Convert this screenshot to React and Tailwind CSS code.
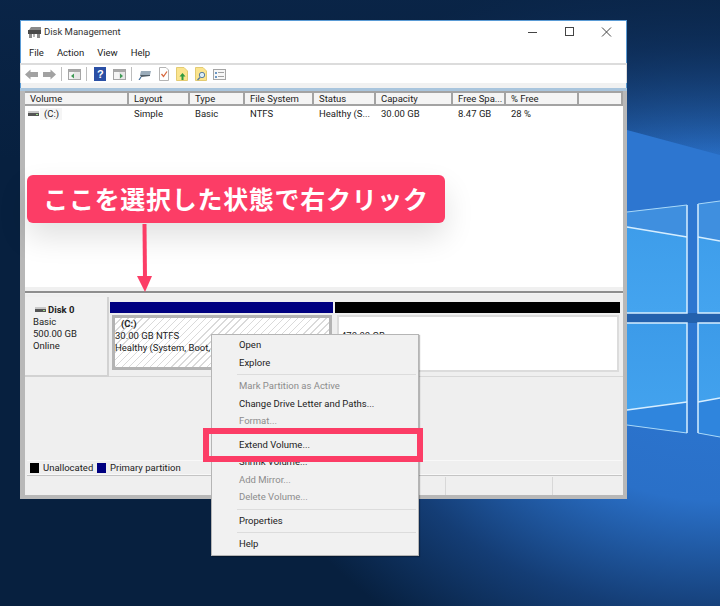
import React from "react";

const columns = [
  { label: "Volume", width: "w-[104px]" },
  { label: "Layout", width: "w-[61px]" },
  { label: "Type", width: "w-[55px]" },
  { label: "File System", width: "w-[69px]" },
  { label: "Status", width: "w-[62px]" },
  { label: "Capacity", width: "w-[77px]" },
  { label: "Free Spa...", width: "w-[53px]" },
  { label: "% Free", width: "w-[73px]" },
  { label: "", width: "flex-1" },
];

const cells = [
  { label: "Simple", width: "w-[61px]" },
  { label: "Basic", width: "w-[55px]" },
  { label: "NTFS", width: "w-[69px]" },
  { label: "Healthy (S...", width: "w-[62px]" },
  { label: "30.00 GB", width: "w-[77px]" },
  { label: "8.47 GB", width: "w-[53px]" },
  { label: "28 %", width: "w-[73px]" },
];

const menuGroups = [
  [
    { label: "Open" },
    { label: "Explore" },
  ],
  [
    { label: "Mark Partition as Active", off: true },
    { label: "Change Drive Letter and Paths..." },
    { label: "Format...", off: true },
  ],
  [
    { label: "Extend Volume..." },
    { label: "Shrink Volume..." },
    { label: "Add Mirror...", off: true },
    { label: "Delete Volume...", off: true },
  ],
  [{ label: "Properties" }],
  [{ label: "Help" }],
];

const DriveIcon = () => (
  <svg width="11" height="6" viewBox="0 0 11 6">
    <rect x="0" y="0" width="11" height="2" fill="#c8c8c8" />
    <rect x="0" y="2" width="11" height="3" fill="#555" />
    <rect x="8" y="3" width="2" height="1" fill="#9fe08a" />
  </svg>
);

const AppIcon = () => (
  <svg width="14" height="13" viewBox="0 0 14 13">
    <path d="M3 1 H13 V4 H1 Z" fill="#8a8a8a" />
    <rect x="0" y="4" width="13" height="4" fill="#4a4a4a" />
    <rect x="1" y="8" width="3" height="4" fill="#8c8c8c" />
    <rect x="9" y="8" width="3" height="4" fill="#8c8c8c" />
    <rect x="5" y="8" width="2" height="3" fill="#b5b5b5" />
  </svg>
);

const ArrowIcon = ({ flip }) => (
  <svg width="13" height="11" viewBox="0 0 13 11" className={flip ? "-scale-x-100" : ""}>
    <path d="M0 5.5 L5.5 .5 V3 H13 V8 H5.5 V10.5 Z" fill="#a2a2a2" />
  </svg>
);

const PaneIcon = ({ green }) => (
  <svg width="13" height="11" viewBox="0 0 13 11">
    <rect x="0.5" y="0.5" width="12" height="10" fill="#e6e6e6" stroke="#a5a5a5" />
    <rect x="1" y="1" width="11" height="2" fill="#a8a8a8" />
    <rect x="1" y="3" width="5" height="7" fill="#f5f5f5" />
    <path d={green ? "M7 4.5 L10 7 L7 9.5 Z" : "M6 4.5 L3 7 L6 9.5 Z"} fill="#3f9a55" />
  </svg>
);

const Separator = () => <div className="h-[14px] w-px bg-[#bdbdbd]" />;

const Toolbar = () => (
  <div className="flex h-[20px] items-center border-t-[2px] border-r border-l border-[#dcdcdc] bg-white pl-[4px]">
    <ArrowIcon />
    <div className="ml-[5px]">
      <ArrowIcon flip />
    </div>
    <div className="ml-[5px]">
      <Separator />
    </div>
    <div className="ml-[6px]">
      <PaneIcon />
    </div>
    <div className="ml-[5px]">
      <Separator />
    </div>
    <svg width="12" height="14" viewBox="0 0 12 14" className="ml-[7px]">
      <rect width="12" height="14" fill="#2a4fa5" />
      <text x="3" y="11" fontSize="11" fontWeight="700" fill="#fff" fontFamily="Liberation Sans, sans-serif">?</text>
    </svg>
    <div className="ml-[7px]">
      <PaneIcon green />
    </div>
    <div className="ml-[5px]">
      <Separator />
    </div>
    <svg width="13" height="11" viewBox="0 0 13 11" className="ml-[6px]">
      <path d="M3 2 H13 L12 6 H2 Z" fill="#9aabb9" />
      <path d="M2 6 H12 V7 L3 8 Z" fill="#4f5c66" />
      <path d="M3 8 L1 11" stroke="#3d6a96" strokeWidth="1.2" />
    </svg>
    <svg width="12" height="14" viewBox="0 0 12 14" className="ml-[7px]">
      <path d="M1.5 .5 H8 L10.5 3 V13.5 H1.5 Z" fill="#fff" stroke="#b4b4b4" />
      <path d="M3.5 7 L5.5 9.5 L9 4.5" fill="none" stroke="#d8693f" strokeWidth="1.3" />
    </svg>
    <svg width="12" height="14" viewBox="0 0 12 14" className="ml-[6px]">
      <path d="M.5 .5 H8 L11.5 4 V13.5 H.5 Z" fill="#fbe48e" stroke="#e3cb72" />
      <path d="M6.5 6 L9.5 9.5 H7.5 V13 H5.5 V9.5 H3.5 Z" fill="#2f9a3f" />
    </svg>
    <svg width="12" height="14" viewBox="0 0 12 14" className="ml-[7px]">
      <path d="M.5 .5 H8 L11.5 4 V13.5 H.5 Z" fill="#fbe48e" stroke="#e3cb72" />
      <circle cx="7" cy="8" r="2.7" fill="#d9ecf7" stroke="#5c7f9c" />
      <path d="M5 10.5 L2.5 13" stroke="#5c7f9c" strokeWidth="1.4" />
    </svg>
    <svg width="13" height="11" viewBox="0 0 13 11" className="ml-[6px]">
      <rect x=".5" y=".5" width="12" height="10" fill="#f7f7f7" stroke="#a5a5a5" />
      <rect x="2" y="3" width="2" height="2" fill="#6b97c4" />
      <rect x="2" y="7" width="2" height="2" fill="#6b97c4" />
      <rect x="5" y="3" width="6" height="1" fill="#a0a0a0" />
      <rect x="5" y="7" width="6" height="1" fill="#a0a0a0" />
    </svg>
  </div>
);

const VolumeList = () => (
  <div className="flex h-[200px] flex-col border-l-[5px] border-r-[4px] border-[#b8b8b8] bg-white">
    <div className="flex h-[15px] border-t-[2px] border-b-[2px] border-[#a3a3a3] bg-[#f4f4f4]">
      {columns.map((col, i) => (
        <div
          key={i}
          className={`${col.width} truncate border-r-[2px] border-[#a3a3a3] pl-[5px] leading-[11px]`}
        >
          {col.label}
        </div>
      ))}
    </div>
    <div className="flex h-[15px] items-center">
      <div className="flex w-[104px] items-center pl-[3px]">
        <DriveIcon />
        <span className="ml-[1px] bg-[#f5f5f5] pl-[4px] pr-[3px]">(C:)</span>
      </div>
      {cells.map((cell) => (
        <div key={cell.label} className={`${cell.width} truncate pl-[5px]`}>
          {cell.label}
        </div>
      ))}
    </div>
    <div className="mt-auto h-[4px] bg-[#f0f0f0]" />
  </div>
);

const DiskPanel = () => (
  <div className="flex h-[182px] flex-col border-l-[5px] border-r-[4px] border-[#b8b8b8] bg-[#efefef]">
    <div className="flex h-[83px] border-b border-[#d8d8d8]">
      <div className="mt-[3px] h-[80px] w-[84px] border-r-[2px] border-b-[2px] border-[#d2d2d2] bg-[#f1f1f1] pl-[8px] pt-[7px] leading-[12px]">
        <div className="flex items-center gap-[2px] pl-[2px] font-bold">
          <DriveIcon />
          <span>Disk 0</span>
        </div>
        <div>Basic</div>
        <div>500.00 GB</div>
        <div>Online</div>
      </div>
      <div className="flex flex-1 gap-[2px] pl-[1px] pr-[3px] pt-[8px]">
        <div className="w-[223px]">
          <div className="h-[11px] bg-[#000080]" />
          <div className="ml-[2px] mr-[1px] mt-[2px] h-[55px] border-[3px] border-[#b4b4b4] bg-[repeating-linear-gradient(135deg,#ffffff_0px,#ffffff_4px,#dadada_4px,#dadada_5px)] leading-[12px]">
            <div className="pl-[6px] font-bold">(C:)</div>
            <div>30.00 GB NTFS</div>
            <div className="whitespace-nowrap">Healthy (System, Boot,</div>
          </div>
        </div>
        <div className="flex-1">
          <div className="h-[11px] bg-black" />
          <div className="ml-[2px] mr-[1px] mt-[2px] h-[57px] border-[2px] border-[#dcdcdc] bg-white pl-[2px] pt-[13px] leading-[12px]">
            470.00 GB
          </div>
        </div>
      </div>
    </div>
    <div className="flex-1" />
    <div className="mb-[1px] ml-[2px] mr-[1px] flex h-[15px] items-center border-t border-b border-[#f8f8f8] pl-[3px] shadow-[0_1px_0_#c4c4c4]">
      <div className="h-[10px] w-[9px] bg-black" />
      <span className="ml-[4px] w-[50px] whitespace-nowrap">Unallocated</span>
      <div className="ml-[4px] h-[10px] w-[9px] bg-[#000080]" />
      <span className="ml-[4px] whitespace-nowrap">Primary partition</span>
    </div>
  </div>
);

const StatusBar = () => (
  <div className="flex h-[23px] border-l-[5px] border-r-[4px] border-b-[4px] border-[#b8b8b8] bg-[#efefef] pt-[1px]">
    <div className="w-[420px]" />
    <div className="w-[107px] border-l border-[#d8d8d8]" />
    <div className="flex-1 border-l border-[#d8d8d8]" />
  </div>
);

const ContextMenu = () => (
  <div className="absolute left-[211px] top-[334px] w-[208px] border border-[#b5b5b5] bg-[#f1f1f1] pb-[2px] pl-[25px] pr-[2px] pt-[1px] font-['Roboto',sans-serif] text-[9.5px] leading-[17.5px] shadow-[1px_1px_1px_rgba(0,0,0,0.25)]">
    {menuGroups.map((group, i) => (
      <div key={i} className={i > 0 ? "mt-[3px] border-t border-[#dcdcdc] pt-[2px]" : ""}>
        {group.map((item) => (
          <div key={item.label} className={item.off ? "pl-[2px] text-[#8c8c8c]" : "pl-[2px] text-[#1c1c1c]"}>
            {item.label}
          </div>
        ))}
      </div>
    ))}
  </div>
);

const Wallpaper = () => (
  <svg className="absolute inset-0" width="720" height="606" viewBox="0 0 720 606">
    <defs>
      <radialGradient id="glow" cx="0" cy="0" r="380" gradientUnits="userSpaceOnUse" gradientTransform="translate(720 330) scale(1.3 1)">
        <stop offset="0" stopColor="#2c78d4" />
        <stop offset="0.45" stopColor="#2a70c8" />
        <stop offset="0.75" stopColor="#143d75" />
        <stop offset="1" stopColor="#07203f" />
      </radialGradient>
      <linearGradient id="topFade" x1="0" y1="0" x2="0" y2="1">
        <stop offset="0" stopColor="#0a2548" stopOpacity="0.85" />
        <stop offset="1" stopColor="#0a2548" stopOpacity="0" />
      </linearGradient>
      <linearGradient id="pane" x1="0" y1="0" x2="0" y2="1">
        <stop offset="0" stopColor="#3c9be9" />
        <stop offset="1" stopColor="#44a4ef" />
      </linearGradient>
    </defs>
    <rect width="720" height="606" fill="url(#glow)" />
    <rect width="720" height="160" fill="url(#topFade)" />
    <path d="M627 130 L720 155 V330 H627 Z" fill="#2d76d0" />

    <path d="M627 212 L687 205 V313 H627 Z" fill="url(#pane)" />
    <path d="M627 212 L687 205 V237 L627 227 Z" fill="#3f8fdf" />
    <path d="M698 204 L720 201 V313 H698 Z" fill="url(#pane)" />
    <path d="M698 204 L720 201 V241 L698 237 Z" fill="#3f8fdf" />
    <rect x="627" y="313" width="93" height="10" fill="#2361ad" />

    <path d="M627 323 H687 V433 L627 425 Z" fill="url(#pane)" />
    <path d="M627 410 L687 402 V433 L627 425 Z" fill="#2f85dd" />
    <path d="M698 323 H720 V437 L698 433 Z" fill="url(#pane)" />
    <path d="M698 402 L720 398 V437 L698 433 Z" fill="#2f85dd" />

    <path d="M627 227 L687 237 M698 237 L720 241" stroke="#d6eeff" strokeWidth="1.5" />
    <path d="M627 410 L687 402 M698 402 L720 398" stroke="#d6eeff" strokeWidth="1.5" />
    <path d="M627 425 L687 433 M698 433 L720 437" stroke="#a9d8f8" strokeWidth="1" />
    <path d="M687 205 V313 H627 M698 204 V313 H720" fill="none" stroke="#d6eeff" strokeWidth="1.5" />
    <path d="M687 433 V323 H627 M698 433 V323 H720" fill="none" stroke="#d6eeff" strokeWidth="1.5" />
    <path d="M698 204 L720 201 M627 212 L687 205" stroke="#a9d8f8" strokeWidth="1" />
  </svg>
);

const App = () => {
  return (
    <div className="relative h-[606px] w-[720px] overflow-hidden bg-[#07203f] font-['Roboto',sans-serif]">
      <Wallpaper />

      <div className="absolute left-[20px] top-[20px] w-[607px] border-t border-[#5a9bd5] bg-white text-[9.5px] leading-[12px] text-[#222]">
        <div className="flex h-[23px] items-center border-l border-r border-[#5a9bd5] pb-[1px] pl-[7px]">
          <AppIcon />
          <span className="ml-[2px] text-[#333]">Disk Management</span>
          <svg width="84" height="12" viewBox="0 0 84 12" className="ml-auto mr-[14px]">
            <path d="M0 6.5 H9" stroke="#444" />
            <rect x="37.5" y="1.5" width="8" height="8" fill="none" stroke="#444" />
            <path d="M74 1.5 L83 10.5 M83 1.5 L74 10.5" stroke="#444" />
          </svg>
        </div>
        <div className="flex h-[19px] items-center gap-[13px] border-l border-r border-[#5a9bd5] pb-[1px] pl-[8px]">
          <span>File</span>
          <span>Action</span>
          <span>View</span>
          <span>Help</span>
        </div>
        <Toolbar />
        <div className="h-[5px] border-l border-r border-[#5a9bd5] bg-[#f1f1f1]" />
        <div className="h-[3px] bg-[#a9c5dd]" />
        <VolumeList />
        <div className="h-[3px] border-l-[5px] border-r-[4px] border-[#b8b8b8] bg-[#8e8e8e] shadow-[inset_0_-1px_0_#f4f4f4]" />
        <DiskPanel />
        <StatusBar />
      </div>

      <ContextMenu />

      <div className="absolute left-[203px] top-[428px] h-[34px] w-[220px] border-[6px] border-[#fc3d66]" />

      <div className="absolute left-[27px] top-[175px] flex h-[48px] w-[418px] items-center justify-center rounded-[6px] bg-[#fc3d66] font-['Noto_Sans_CJK_JP','Noto_Sans_CJK_SC',sans-serif] text-[25px] font-bold tracking-[0.7px] text-white shadow-[0_14px_30px_rgba(0,0,0,0.12)]">
        ここを選択した状態で右クリック
      </div>

      <svg className="absolute left-[136px] top-[224px]" width="18" height="70" viewBox="0 0 18 70">
        <path d="M8.5 0 L9 56" stroke="#fc3d66" strokeWidth="4" />
        <path d="M1 52 H16 L9 68 Z" fill="#fc3d66" />
      </svg>
    </div>
  );
};

export default App;
